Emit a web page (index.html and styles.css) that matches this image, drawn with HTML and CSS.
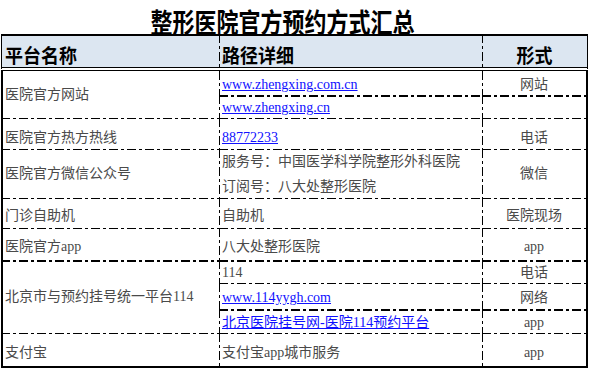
FILE: index.html
```html
<!DOCTYPE html>
<html lang="zh-CN">
<head>
<meta charset="utf-8">
<title>整形医院官方预约方式汇总</title>
<link rel="stylesheet" href="styles.css">
</head>
<body>
<div class="title"><span>整形医院官方预约方式汇总</span></div>
<div class="sheet">
  <div class="cell hd c1"><span>平台名称</span></div>
  <div class="cell hd c2"><span>路径详细</span></div>
  <div class="cell hd c3"><span>形式</span></div>

  <div class="cell c1 mid span2">医院官方网站</div>
  <div class="cell c2 p1"><span class="lk">www.zhengxing.com.cn</span></div>
  <div class="cell c3 p1">网站</div>
  <div class="cell c2 t2 p1"><span class="lk">www.zhengxing.cn</span></div>
  <div class="cell c3 t2"></div>

  <div class="cell c1 t1">医院官方热方热线</div>
  <div class="cell c2 t1"><span class="lk">88772233</span></div>
  <div class="cell c3 t1">电话</div>

  <div class="cell c1 t1 mid">医院官方微信公众号</div>
  <div class="cell c2 t1 mid two"><span>服务号：中国医学科学院整形外科医院<br>订阅号：八大处整形医院</span></div>
  <div class="cell c3 t1 mid">微信</div>

  <div class="cell c1 t1 p3">门诊自助机</div>
  <div class="cell c2 t1 p3">自助机</div>
  <div class="cell c3 t1 p3">医院现场</div>

  <div class="cell c1 t1 p4">医院官方app</div>
  <div class="cell c2 t1 p4">八大处整形医院</div>
  <div class="cell c3 t1 p4">app</div>

  <div class="cell c1 t2 mid span3">北京市与预约挂号统一平台114</div>
  <div class="cell c2 t2 p1">114</div>
  <div class="cell c3 t2 p1">电话</div>
  <div class="cell c2 t1"><span class="lk">www.114yygh.com</span></div>
  <div class="cell c3 t1">网络</div>
  <div class="cell c2 t2 p1"><span class="lk">北京医院挂号网-医院114预约平台</span></div>
  <div class="cell c3 t2 p1">app</div>

  <div class="cell c1 t1 last p4">支付宝</div>
  <div class="cell c2 t1 last p4">支付宝app城市服务</div>
  <div class="cell c3 t1 last p4">app</div>
</div>
</body>
</html>
```

FILE: styles.css
```css
:root {
  --dh: repeating-linear-gradient(to right, #000 0 9px, transparent 9px 12px, #000 12px 15px, transparent 15px 18px);
  --dv: repeating-linear-gradient(to bottom, #000 0 9px, transparent 9px 12px, #000 12px 15px, transparent 15px 18px);
}

* {
  box-sizing: border-box;
}

body {
  margin: 0;
  background: #fff;
  font-family: "Liberation Serif", "Noto Sans CJK SC", serif;
  font-size: 14px;
  color: #4a4a4a;
}

.title {
  height: 34px;
  display: flex;
  justify-content: center;
  align-items: flex-end;
  padding-right: 26px;
}

.title span {
  display: inline-block;
  font-family: "Noto Sans CJK SC", sans-serif;
  font-weight: 700;
  font-size: 22px;
  line-height: 22px;
  color: #000;
  transform: scaleY(1.25);
  transform-origin: 50% 100%;
}

.sheet {
  margin-left: 1px;
  width: 587px;
  display: grid;
  grid-template-columns: 218px 263px 106px;
  grid-template-rows: 37px 24px 23px 31px 49px 30px 32px 23px 26px 24px 35px;
}

.cell {
  --bt: none;
  --bts: 100% 1px;
  --bl: none;
  background-image: var(--bt), var(--bl);
  background-size: var(--bts), 1px 100%;
  background-repeat: no-repeat;
  background-origin: border-box;
  background-position: 0 0, 0 0;
  display: flex;
  align-items: flex-end;
  padding: 0 2px 2px;
  line-height: 18px;
  white-space: nowrap;
}

.t1 {
  --bt: var(--dh);
}

.t2 {
  --bt: var(--dh);
  --bts: 100% 2px;
}

.c1 {
  border-left: 2px solid #000;
}

.c2 {
  --bl: var(--dv);
  padding-left: 3px;
}

.c3 {
  --bl: var(--dv);
  border-right: 2px solid #000;
  justify-content: center;
}

.last {
  border-bottom: 2px solid #000;
}

.span2 {
  grid-row: span 2;
}

.span3 {
  grid-row: span 3;
}

.mid {
  align-items: center;
  padding-bottom: 0;
}

.p1 {
  padding-bottom: 1px;
}

.p3 {
  padding-bottom: 3px;
}

.p4 {
  padding-bottom: 4px;
}

.two {
  line-height: 25px;
}

.lk {
  color: #1010ff;
  text-decoration: underline;
}

.hd {
  background-color: #dce6f1;
  background-clip: padding-box;
  border-top: 2px solid #000;
  border-bottom: 4px double #000;
  font-weight: 700;
  font-size: 18px;
  color: #000;
  padding-bottom: 0;
}

.hd.c1 {
  border-left-width: 1px;
  padding-left: 3px;
}

.hd.c3 {
  border-right-width: 1px;
}

.hd span {
  display: inline-block;
  font-family: "Noto Sans CJK SC", sans-serif;
  line-height: 24px;
  transform: scaleY(1.1);
  transform-origin: 50% 100%;
}
```
